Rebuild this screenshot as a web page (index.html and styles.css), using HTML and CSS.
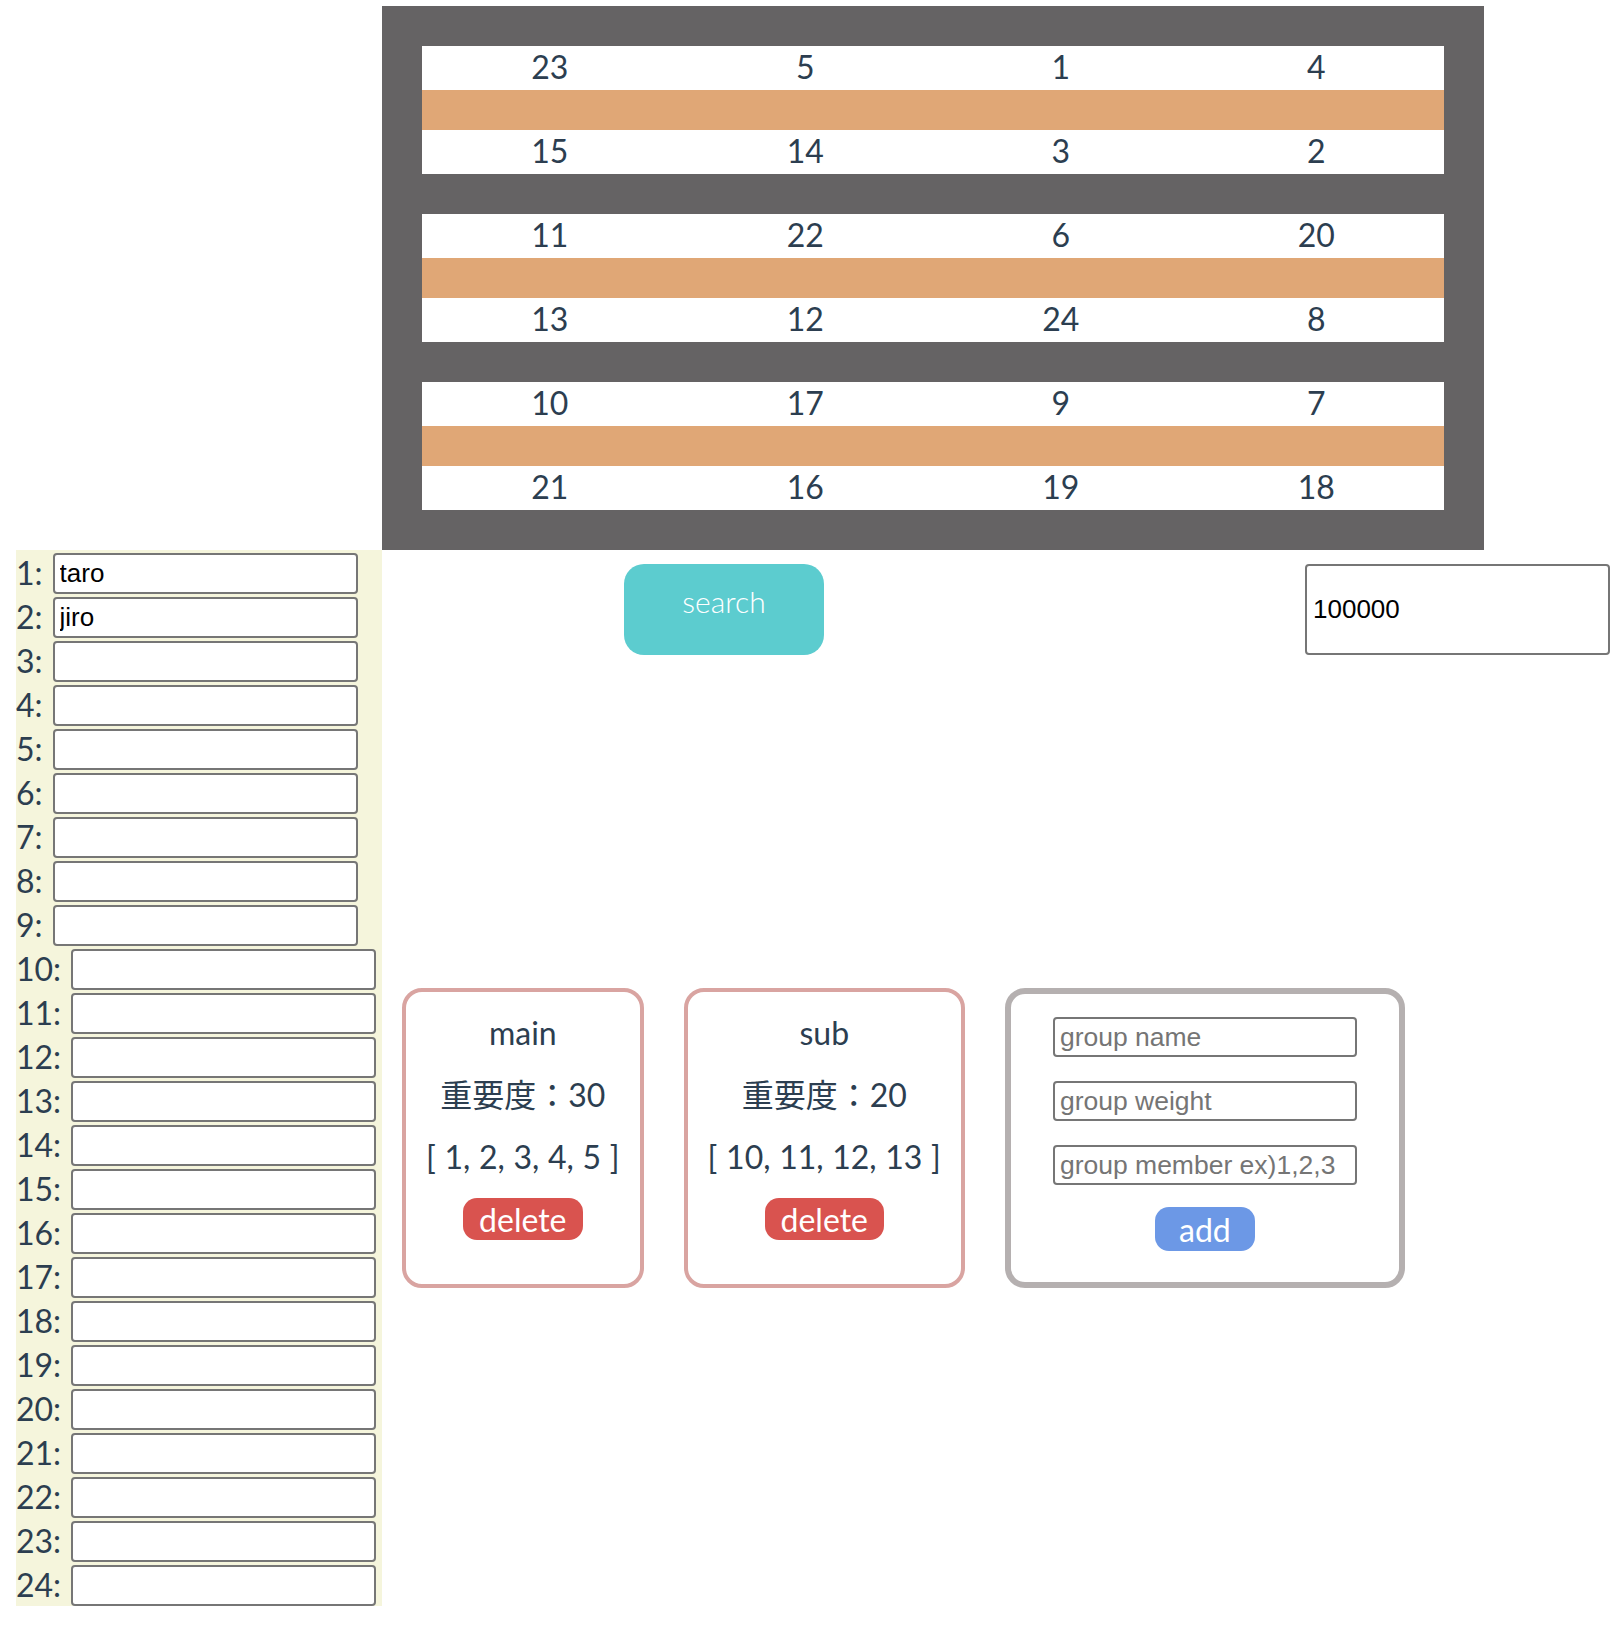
FILE: index.html
```
<!DOCTYPE html>
<html lang="ja">
<head>
	<meta charset="UTF-8">
	<title>seat</title>
	<link rel="stylesheet" href="styles.css">
</head>
<body>
	<div class="app">
		<div class="room">
			<div class="island">
				<div class="seatRow">
					<span class="seat">23</span><span class="seat">5</span><span class="seat">1</span><span class="seat">4</span>
				</div>
				<div class="desk"></div>
				<div class="seatRow">
					<span class="seat">15</span><span class="seat">14</span><span class="seat">3</span><span class="seat">2</span>
				</div>
			</div>
			<div class="island">
				<div class="seatRow">
					<span class="seat">11</span><span class="seat">22</span><span class="seat">6</span><span class="seat">20</span>
				</div>
				<div class="desk"></div>
				<div class="seatRow">
					<span class="seat">13</span><span class="seat">12</span><span class="seat">24</span><span class="seat">8</span>
				</div>
			</div>
			<div class="island">
				<div class="seatRow">
					<span class="seat">10</span><span class="seat">17</span><span class="seat">9</span><span class="seat">7</span>
				</div>
				<div class="desk"></div>
				<div class="seatRow">
					<span class="seat">21</span><span class="seat">16</span><span class="seat">19</span><span class="seat">18</span>
				</div>
			</div>
		</div>

		<div class="lower">
			<ul class="members">
				<li><span class="num">1:</span><input type="text" value="taro"></li>
				<li><span class="num">2:</span><input type="text" value="jiro"></li>
				<li><span class="num">3:</span><input type="text"></li>
				<li><span class="num">4:</span><input type="text"></li>
				<li><span class="num">5:</span><input type="text"></li>
				<li><span class="num">6:</span><input type="text"></li>
				<li><span class="num">7:</span><input type="text"></li>
				<li><span class="num">8:</span><input type="text"></li>
				<li><span class="num">9:</span><input type="text"></li>
				<li><span class="num">10:</span><input type="text"></li>
				<li><span class="num">11:</span><input type="text"></li>
				<li><span class="num">12:</span><input type="text"></li>
				<li><span class="num">13:</span><input type="text"></li>
				<li><span class="num">14:</span><input type="text"></li>
				<li><span class="num">15:</span><input type="text"></li>
				<li><span class="num">16:</span><input type="text"></li>
				<li><span class="num">17:</span><input type="text"></li>
				<li><span class="num">18:</span><input type="text"></li>
				<li><span class="num">19:</span><input type="text"></li>
				<li><span class="num">20:</span><input type="text"></li>
				<li><span class="num">21:</span><input type="text"></li>
				<li><span class="num">22:</span><input type="text"></li>
				<li><span class="num">23:</span><input type="text"></li>
				<li><span class="num">24:</span><input type="text"></li>
			</ul>

			<div class="main">
				<div class="controls">
					<button class="searchBtn">search</button>
					<input class="loopCount" type="text" value="100000">
				</div>

				<div class="groups">
					<div class="group">
						<p>main</p>
						<p>重要度：30</p>
						<p class="memberList">[ 1, 2, 3, 4, 5 ]</p>
						<button class="deleteBtn">delete</button>
					</div>
					<div class="group">
						<p>sub</p>
						<p>重要度：20</p>
						<p class="memberList">[ 10, 11, 12, 13 ]</p>
						<button class="deleteBtn">delete</button>
					</div>
					<div class="group newGroup">
						<input type="text" placeholder="group name">
						<input type="text" placeholder="group weight">
						<input type="text" placeholder="group member ex)1,2,3">
						<button class="addBtn">add</button>
					</div>
				</div>
			</div>
		</div>
	</div>
</body>
</html>
```

FILE: styles.css
```
* {
	padding: 0;
	margin: 0;
	list-style: none;
	box-sizing: border-box;
}
body {
	font-family: "Lato", "Noto Sans CJK JP", sans-serif;
	font-size: 32px;
	color: #2c3e50;
	background: #fff;
}
input {
	font-family: "Liberation Sans", Arial, sans-serif;
	font-size: 26px;
	color: #000;
	border: 2px solid #767676;
	border-radius: 4px;
	padding: 0 5px;
	background: #fff;
	outline: none;
}
input::placeholder {
	color: #757575;
}
button {
	font-family: "Lato", sans-serif;
	border: none;
	color: #fff;
	cursor: pointer;
}

/* 座席の表示 */
.room {
	width: 1102px;
	margin: 6px 0 0 382px;
	padding: 40px;
	background: #656364;
}
.island + .island {
	margin-top: 40px;
}
.seatRow {
	display: flex;
	height: 44px;
	background: #fff;
}
.seat {
	flex: 1;
	line-height: 42px;
	text-align: center;
}
.desk {
	height: 40px;
	background: #e0a776;
}

.lower {
	display: flex;
	margin-left: 16px;
}

/* メンバー入力欄 */
.members {
	width: 366px;
	background: #f5f5dc;
}
.members li {
	display: flex;
	align-items: flex-end;
	height: 44px;
}
.members .num {
	line-height: 42px;
}
.members input {
	width: 305px;
	height: 41px;
	margin-left: 10px;
}

.main {
	flex: 1;
}
.controls {
	display: flex;
	margin-top: 14px;
	padding-left: 242px;
}
.searchBtn {
	width: 200px;
	height: 91px;
	padding-bottom: 18px;
	border-radius: 20px;
	background: #5ccccf;
	font-size: 30px;
	font-weight: 300;
}
.loopCount {
	width: 305px;
	height: 91px;
	margin-left: auto;
	margin-right: 8px;
	padding: 0 6px;
}

/* グループ */
.groups {
	display: flex;
	gap: 40px;
	margin-top: 333px;
	padding-left: 20px;
}
.group {
	display: flex;
	flex-direction: column;
	align-items: center;
	gap: 22px;
	height: 300px;
	padding: 21px 20px 0;
	border: 4px solid #d9a4a1;
	border-radius: 20px;
	text-align: center;
}
.group p {
	line-height: 40px;
	white-space: nowrap;
}
.memberList {
	word-spacing: 0.5px;
}
.deleteBtn {
	height: 42px;
	margin-top: -1px;
	padding: 0 16px;
	border-radius: 14px;
	background: #d9534f;
	font-size: 32px;
}
.newGroup {
	width: 400px;
	gap: 0;
	padding-top: 23px;
	border: 6px solid #b5b0b0;
}
.newGroup input {
	width: 304px;
	height: 40px;
	margin-bottom: 24px;
	font-size: 26.5px;
}
.newGroup input:nth-of-type(3) {
	margin-bottom: 22px;
}
.addBtn {
	width: 100px;
	height: 44px;
	border-radius: 14px;
	background: #6c98e6;
	font-size: 32px;
}
```
